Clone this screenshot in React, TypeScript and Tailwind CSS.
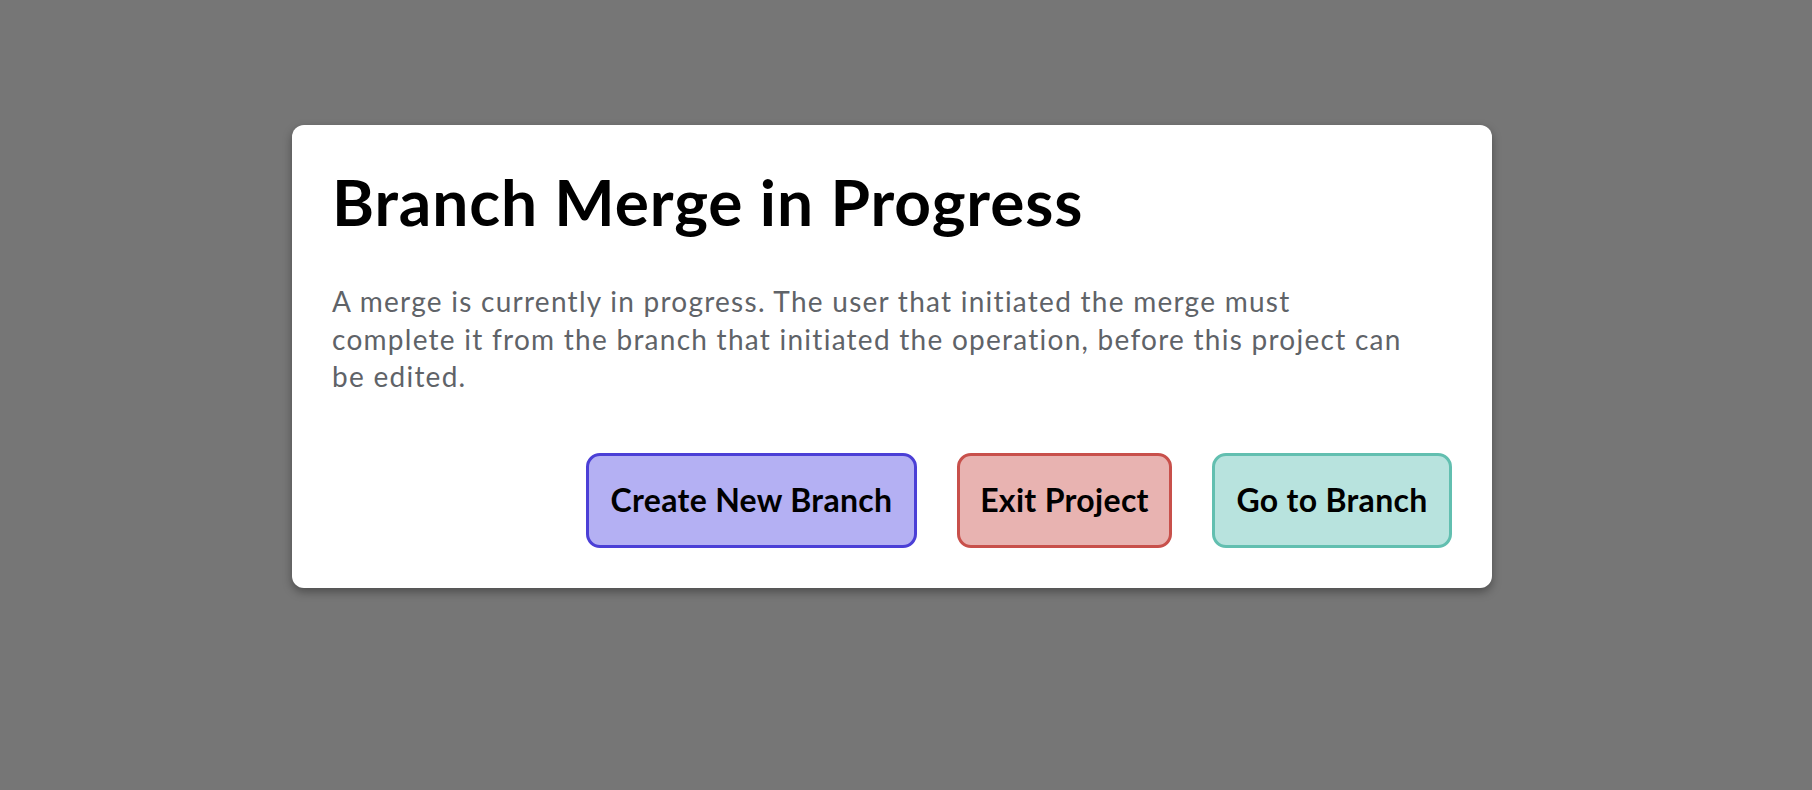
import React from "react";

const buttons = [
  {
    label: "Create New Branch",
    className: "w-[331px] bg-[#b4b0f3] border-[#4b3fd6]",
  },
  {
    label: "Exit Project",
    className: "w-[215px] bg-[#e8b3b1] border-[#c8504b]",
  },
  {
    label: "Go to Branch",
    className: "w-[240px] bg-[#b8e3de] border-[#62bfb0]",
  },
];

export default function App() {
  return (
    <div className="min-h-[790px] w-full bg-[#767676] pl-[292px] pt-[125px] font-['Lato','Liberation_Sans',sans-serif]">
      <div className="w-[1200px] rounded-[12px] bg-white px-[40px] pt-[45px] pb-[40px] shadow-[0_4px_10px_rgba(0,0,0,0.35)]">
        <h1 className="text-[64px] leading-[64px] font-bold tracking-[0.014em] text-black">
          Branch Merge in Progress
        </h1>
        <p className="mt-[49px] text-[28px] leading-[37.5px] tracking-[0.045em] text-[#5f6368]">
          A merge is currently in progress. The user that initiated the merge
          must
          <br />
          complete it from the branch that initiated the operation, before this
          project can
          <br />
          be edited.
        </p>
        <div className="mt-[57px] flex justify-end gap-[40px]">
          {buttons.map((b) => (
            <button
              key={b.label}
              className={`flex h-[95px] items-center justify-center rounded-[14px] border-[3px] text-[32px] font-bold tracking-[0.01em] text-black ${b.className}`}
            >
              {b.label}
            </button>
          ))}
        </div>
      </div>
    </div>
  );
}
